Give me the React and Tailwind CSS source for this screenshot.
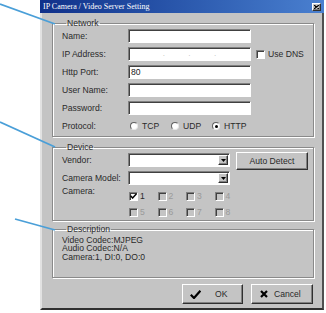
import React from 'react';

const sunken =
  'border border-t-[#808080] border-l-[#808080] border-b-white border-r-white shadow-[inset_1px_1px_0_#404040]';
const raised =
  'border border-t-white border-l-white border-b-[#303030] border-r-[#303030] shadow-[inset_-1px_-1px_0_#808080]';
const group =
  'border border-[#8a8a8a] shadow-[inset_1px_1px_0_#fff,1px_1px_0_#fff] min-w-0';

const Label = ({ children, className = '' }) => (
  <span className={`w-[66px] shrink-0 text-[8.6px] leading-[10px] text-[#2a2a2a] ${className}`}>{children}</span>
);

const Field = ({ children, className = '' }) => (
  <div className={`h-[14px] bg-white ${sunken} ${className}`}>{children}</div>
);

const Select = () => (
  <div className={`w-[102px] h-[14px] bg-white ${sunken} flex justify-end items-stretch p-[1px]`}>
    <div className={`w-[10px] bg-[#c4c4c4] ${raised} flex items-center justify-center`}>
      <svg width="5" height="3" viewBox="0 0 5 3">
        <path d="M0 0 L5 0 L2.5 3 Z" fill="#000" />
      </svg>
    </div>
  </div>
);

const Check = ({ checked, disabled }) => (
  <span
    className={`w-[9px] h-[9px] shrink-0 ${sunken} ${disabled ? 'bg-[#c4c4c4]' : 'bg-white'} flex items-center justify-center`}
  >
    {checked && (
      <svg width="7" height="6" viewBox="0 0 7 6">
        <path d="M0.5 2.8 L2.6 5 L6.5 0.8" stroke="#000" strokeWidth="1.5" fill="none" />
      </svg>
    )}
  </span>
);

const Radio = ({ label, selected }) => (
  <span className="flex items-center gap-[4px] w-[41px]">
    <span className="w-[8px] h-[8px] shrink-0 rounded-full bg-white border border-t-[#606060] border-l-[#606060] border-b-[#e8e8e8] border-r-[#e8e8e8] flex items-center justify-center">
      {selected && <span className="w-[3px] h-[3px] rounded-full bg-black" />}
    </span>
    <span className="text-[8.6px] leading-[10px] text-[#2a2a2a]">{label}</span>
  </span>
);

const Cam = ({ n, checked }) => (
  <span className="flex items-center gap-[2px] w-[28.5px] h-[14px]">
    <Check checked={checked} disabled={!checked} />
    <span className={`text-[8.6px] leading-[10px] ${checked ? 'text-[#2a2a2a]' : 'text-[#9a9a9a]'}`}>{n}</span>
  </span>
);

const Legend = ({ children }) => (
  <legend className="ml-[4px] px-[1px] text-[8.6px] leading-[10px] text-[#2a2a2a]">{children}</legend>
);

export default function App() {
  return (
    <div className="relative w-[326px] h-[313px] bg-white overflow-hidden font-['Liberation_Sans',Arial,sans-serif]">
      <div className="ml-[40px] w-[284px] flex flex-col">
        {/* title bar */}
        <div className="h-[13px] bg-gradient-to-r from-[#10308a] to-[#4a80d0] flex items-center justify-between pl-[3px] pr-[3px]">
          <span className="text-white text-[8px] leading-[10px] font-['Liberation_Serif','Times_New_Roman',serif] whitespace-nowrap">
            IP Camera / Video Server Setting
          </span>
          <span className={`w-[9px] h-[8px] bg-[#c4c4c4] ${raised} flex items-center justify-center`}>
            <svg width="5" height="4" viewBox="0 0 5 4">
              <path d="M0 0 L5 4 M5 0 L0 4" stroke="#000" strokeWidth="1.2" />
            </svg>
          </span>
        </div>

        <div className="bg-[#c4c4c4] border-l-2 border-l-[#e2e2e2] border-r-2 border-r-[#505050] border-b-2 border-b-[#303030] pl-[10px] pr-[8px] pt-[5px] pb-[4px] flex flex-col">
          {/* Network */}
          <fieldset className={`${group} pl-[9px] pt-[1px] pb-[3px]`}>
            <Legend>Network</Legend>
            <div className="flex flex-col gap-[4px]">
              <div className="flex items-center h-[14px]">
                <Label>Name:</Label>
                <Field className="w-[123px]" />
              </div>
              <div className="flex items-center h-[14px]">
                <Label>IP Address:</Label>
                <Field className="w-[123px] flex items-center justify-around px-[22px] text-[#bbbbbb] text-[8px] leading-[10px]">
                  <span>.</span>
                  <span>.</span>
                  <span>.</span>
                </Field>
                <span className="ml-[5px] flex items-center gap-[3px]">
                  <Check />
                  <span className="text-[8.6px] leading-[10px] text-[#2a2a2a]">Use DNS</span>
                </span>
              </div>
              <div className="flex items-center h-[14px]">
                <Label>Http Port:</Label>
                <Field className="w-[123px] pl-[2px] text-[8.6px] leading-[12px] text-[#222]">80</Field>
              </div>
              <div className="flex items-center h-[14px]">
                <Label>User Name:</Label>
                <Field className="w-[123px]" />
              </div>
              <div className="flex items-center h-[14px]">
                <Label>Password:</Label>
                <Field className="w-[123px]" />
              </div>
              <div className="flex items-center h-[14px]">
                <Label>Protocol:</Label>
                <span className="flex items-center pl-[2px]">
                  <Radio label="TCP" />
                  <Radio label="UDP" />
                  <Radio label="HTTP" selected />
                </span>
              </div>
            </div>
          </fieldset>

          {/* Device */}
          <fieldset className={`${group} mt-[5px] pl-[9px] pb-[1px]`}>
            <Legend>Device</Legend>
            <div className="flex items-start h-[18px]">
              <Label className="mt-[3px]">Vendor:</Label>
              <div className="mt-[1px]">
                <Select />
              </div>
              <button
                className={`ml-[6px] w-[72px] h-[18px] bg-[#c4c4c4] ${raised} text-[8.6px] leading-[10px] text-[#2a2a2a]`}
              >
                Auto Detect
              </button>
            </div>
            <div className="flex items-center h-[14px] mt-[1px]">
              <Label>Camera Model:</Label>
              <Select />
            </div>
            <div className="flex items-start mt-[1px]">
              <Label className="mt-[0px]">Camera:</Label>
              <div className="flex flex-col gap-[2px] mt-[3px] pl-[1px]">
                <div className="flex">
                  <Cam n="1" checked />
                  <Cam n="2" />
                  <Cam n="3" />
                  <Cam n="4" />
                </div>
                <div className="flex">
                  <Cam n="5" />
                  <Cam n="6" />
                  <Cam n="7" />
                  <Cam n="8" />
                </div>
              </div>
            </div>
          </fieldset>

          {/* Description */}
          <fieldset className={`${group} mt-[3px] pl-[9px] pt-[1.5px] pb-[16px]`}>
            <Legend>Description</Legend>
            <div className="flex flex-col text-[8.6px] leading-[8.5px] text-[#2a2a2a]">
              <span>Video Codec:MJPEG</span>
              <span>Audio Codec:N/A</span>
              <span>Camera:1, DI:0, DO:0</span>
            </div>
          </fieldset>

          {/* buttons */}
          <div className="flex justify-end gap-[8px] mt-[6px] pr-[1px]">
            <button
              className={`w-[61px] h-[20px] bg-[#c4c4c4] ${raised} flex items-center pl-[7px] gap-[14px] text-[8.6px] leading-[10px] text-[#2a2a2a]`}
            >
              <svg width="11" height="9" viewBox="0 0 11 9">
                <path d="M0.8 4.8 L4 8 L10.4 0.8" stroke="#000" strokeWidth="2.2" fill="none" />
              </svg>
              <span>OK</span>
            </button>
            <button
              className={`w-[62px] h-[20px] bg-[#c4c4c4] ${raised} flex items-center pl-[8px] gap-[6px] text-[8.6px] leading-[10px] text-[#2a2a2a]`}
            >
              <svg width="8" height="8" viewBox="0 0 8 8">
                <path d="M1 1 L7 7 M7 1 L1 7" stroke="#000" strokeWidth="2.2" />
              </svg>
              <span>Cancel</span>
            </button>
          </div>
        </div>
      </div>

      {/* callout lines */}
      <svg className="absolute inset-0 pointer-events-none" width="326" height="313" viewBox="0 0 326 313">
        <path d="M0 4 L55 24" stroke="#4a9fd8" strokeWidth="1.8" fill="none" />
        <path d="M0 122 L55 147" stroke="#4a9fd8" strokeWidth="1.8" fill="none" />
        <path d="M15 219 L55 230" stroke="#4a9fd8" strokeWidth="1.8" fill="none" />
      </svg>
    </div>
  );
}
